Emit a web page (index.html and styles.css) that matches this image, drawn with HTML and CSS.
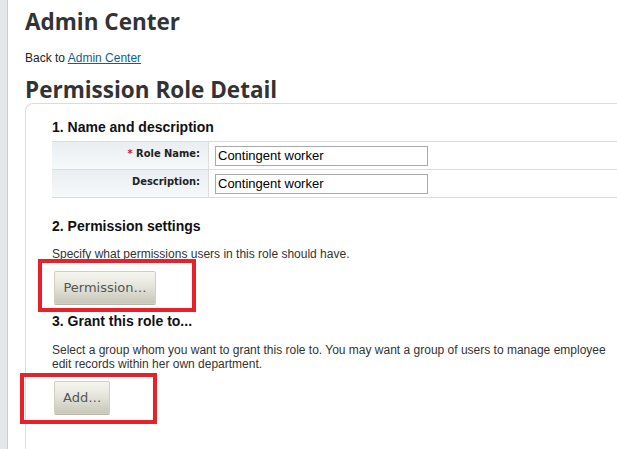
FILE: index.html
```html
<!DOCTYPE html>
<html>
<head>
<meta charset="utf-8">
<link rel="stylesheet" href="styles.css">
</head>
<body>
<div class="layout">
  <div class="sidebar"></div>
  <div class="main">
    <h1 class="title">Admin Center</h1>
    <p class="back">Back to <a href="#">Admin Center</a></p>
    <h2 class="subtitle">Permission Role Detail</h2>
    <div class="panel">
      <h3 class="section-title first">1. Name and description</h3>
      <div class="form-table">
        <div class="row">
          <div class="label"><span class="req">*</span> Role Name:</div>
          <div class="field"><input class="text-input" type="text" value="Contingent worker"></div>
        </div>
        <div class="row">
          <div class="label">Description:</div>
          <div class="field"><input class="text-input" type="text" value="Contingent worker"></div>
        </div>
      </div>

      <h3 class="section-title">2. Permission settings</h3>
      <p class="desc">Specify what permissions users in this role should have.</p>
      <div class="btn-row btn-row-1">
        <button class="btn btn-perm">Permission…</button>
        <div class="callout callout-1"></div>
      </div>

      <h3 class="section-title third">3. Grant this role to...</h3>
      <p class="desc desc-wide">Select a group whom you want to grant this role to. You may want a group of users to manage employee edit records within her own department.</p>
      <div class="btn-row btn-row-2">
        <button class="btn btn-add">Add…</button>
        <div class="callout callout-2"></div>
      </div>
    </div>
  </div>
</div>
</body>
</html>
```

FILE: styles.css
```css
html, body {
  margin: 0;
  padding: 0;
  background: #fff;
  overflow: hidden;
}
.layout {
  display: flex;
  min-height: 449px;
  width: 617px;
}
.sidebar {
  width: 7px;
  flex: none;
  background: #e4e7ea;
  border-right: 1px solid #c9ccd0;
}
.main {
  flex: 1;
  padding-left: 17px;
  min-width: 0;
  font-family: "Liberation Sans", Arial, sans-serif;
}
.title {
  margin: 8px 0 0 0;
  font-family: "Open Sans", "DejaVu Sans", sans-serif;
  font-weight: 700;
  font-size: 22.5px;
  line-height: 28px;
  color: #333;
}
.back {
  margin: 15px 0 0 0;
  font-size: 12px;
  line-height: 14px;
  color: #222;
}
.back a {
  color: #0a5f9e;
  text-decoration: underline;
}
.subtitle {
  margin: 12px 0 0 0;
  font-family: "Open Sans", "DejaVu Sans", sans-serif;
  font-weight: 700;
  font-size: 22.5px;
  line-height: 26px;
  color: #333;
}
.panel {
  position: relative;
  border-left: 1px solid #dcdcdc;
  border-top: 1px solid #dcdcdc;
  border-top-left-radius: 8px;
  padding-left: 26px;
  min-height: 360px;
}
.section-title {
  margin: 20px 0 0 0;
  font-size: 14px;
  line-height: 16px;
  font-weight: 700;
  color: #111;
}
.section-title.first {
  margin-top: 0;
  padding-top: 15px;
}
.section-title.third {
  margin-top: 9px;
}
.form-table {
  margin-top: 6px;
  border-top: 1px solid #dcdcdc;
}
.row {
  display: flex;
  height: 27px;
  border-bottom: 1px solid #dcdcdc;
}
.label {
  width: 148px;
  padding-right: 8px;
  flex: none;
  text-align: right;
  font-family: "DejaVu Sans Condensed", "DejaVu Sans", sans-serif;
  font-weight: 700;
  font-size: 11px;
  line-height: 24px;
  color: #222;
  background: linear-gradient(to bottom, #e9eef2, #f7f9fa);
  border-right: 1px solid #dcdcdc;
}
.req {
  color: #d42020;
}
.field {
  padding-left: 6px;
  display: flex;
  align-items: center;
}
.text-input {
  box-sizing: border-box;
  width: 213px;
  height: 20px;
  margin: 0;
  padding: 0 2px;
  border: 1px solid #a9a9a9;
  font-family: "Liberation Sans", Arial, sans-serif;
  font-size: 13px;
  color: #000;
  background: #fff;
}
.desc {
  margin: 13px 0 0 0;
  font-size: 12px;
  line-height: 14px;
  color: #333;
  white-space: nowrap;
}
.desc-wide {
  margin-top: 14px;
  white-space: normal;
  width: 570px;
}
.btn-row {
  position: relative;
  padding-left: 2px;
  margin-top: 10px;
}
.btn {
  display: block;
  box-sizing: border-box;
  height: 33px;
  margin: 0;
  padding: 0 8px;
  border: 1px solid #d2d0b4;
  border-radius: 2px;
  background: linear-gradient(to bottom, #f6f6f1 0%, #e6e5dc 45%, #c9c7ba 100%);
  font-family: "DejaVu Sans", sans-serif;
  font-size: 13px;
  color: #555;
  box-shadow: 0 1px 0 #b8b6a8;
}
.btn-perm {
  width: 102px;
}
.btn-add {
  width: 56px;
}
.callout {
  position: absolute;
  box-sizing: border-box;
  border: 4px solid #e8202a;
  pointer-events: none;
}
.callout-1 {
  left: -14px;
  top: -12px;
  width: 158px;
  height: 53px;
}
.callout-2 {
  left: -32px;
  top: -8px;
  width: 137px;
  height: 51px;
}
```
